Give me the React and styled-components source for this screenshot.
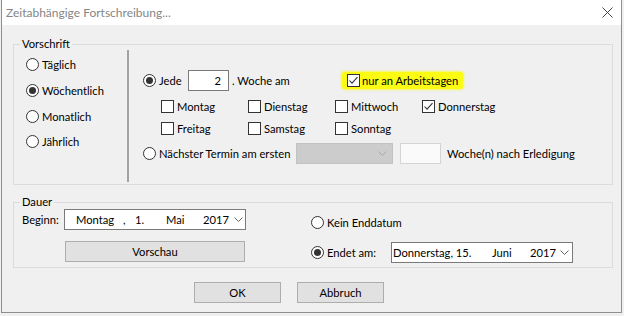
import React from 'react';
import styled, { createGlobalStyle } from 'styled-components';

const FONT = `"Lato", "Segoe UI", "Liberation Sans", sans-serif`;
const SIZE = '11.2px';

const Global = createGlobalStyle`
  html, body { margin: 0; padding: 0; background: #f0f0f0; }
  body { font-family: ${FONT}; font-size: ${SIZE}; color: #000; }
  * { box-sizing: border-box; }
  svg { flex: none; display: block; }
`;

const Window = styled.div`
  margin-left: 1px;
  width: 621px;
  height: 313px;
  border: 1px solid #8e8e8e;
  border-top: none;
  background: #f0f0f0;
  display: flex;
  flex-direction: column;
`;

const TitleBar = styled.div`
  height: 25px;
  flex: none;
  background: #fff;
  display: flex;
  align-items: center;
  justify-content: space-between;
  padding: 0 8px 0 4px;
`;

const Title = styled.span`
  color: #858585;
  font-size: 12px;
`;

const Body = styled.div`
  padding: 13px 8px 0 11px;
  display: flex;
  flex-direction: column;
`;

const GroupBox = styled.fieldset`
  margin: ${p => p.$top || 0}px 0 0 0;
  padding: 0;
  border: 1px solid #dcdcdc;
  min-width: 0;
`;

const Legend = styled.legend`
  padding: 0 2px;
  margin-left: 6px;
  line-height: 12px;
  font-size: ${SIZE};
`;

const RuleInner = styled.div`
  display: flex;
  height: 134px;
`;

const FreqColumn = styled.div`
  width: 113px;
  padding: 2px 0 0 12px;
  display: flex;
  flex-direction: column;
`;

const FreqRow = styled.div`
  height: 25.67px;
  display: flex;
  align-items: center;
`;

const Separator = styled.div`
  width: 2px;
  height: 132px;
  background: #a3a3a3;
`;

const DetailColumn = styled.div`
  flex: 1;
  padding: 19px 0 0 14px;
  display: flex;
  flex-direction: column;
`;

const Row = styled.div`
  display: flex;
  align-items: center;
  height: ${p => p.$h || 21}px;
  margin-top: ${p => p.$mt || 0}px;
`;

const Choice = styled.label`
  display: flex;
  align-items: center;
  gap: 3px;
  width: ${p => (p.$w ? `${p.$w}px` : 'auto')};
  flex: none;
  white-space: nowrap;
`;

const NumberBox = styled.div`
  width: 41px;
  height: 21px;
  background: #fff;
  border: 1px solid #7a7a7a;
  display: flex;
  align-items: center;
  justify-content: flex-end;
  padding-right: 7px;
  flex: none;
`;

const InlineText = styled.span`
  margin-left: ${p => p.$ml || 0}px;
  width: ${p => (p.$w ? `${p.$w}px` : 'auto')};
  white-space: nowrap;
  flex: none;
`;

const Highlight = styled.label`
  display: flex;
  align-items: center;
  gap: 2px;
  height: 17px;
  width: 121px;
  padding-left: 5px;
  background: #fbfb14;
  border-radius: 3px;
  box-shadow: 0 0 2px 1px rgba(250, 250, 30, 0.7);
  white-space: nowrap;
  flex: none;
`;

const DayGrid = styled.div`
  margin: 4px 0 0 18px;
  display: grid;
  grid-template-columns: repeat(4, 87px);
  grid-auto-rows: 22px;
  align-items: center;
`;

const DisabledCombo = styled.div`
  width: 97px;
  height: 21px;
  background: #cccccc;
  border: 1px solid #c2c2c2;
  display: flex;
  align-items: center;
  justify-content: flex-end;
  padding-right: 5px;
  flex: none;
`;

const DisabledEdit = styled.div`
  margin-left: 7px;
  width: 41px;
  height: 21px;
  background: #fafafa;
  border: 1px solid #d4d4d4;
  flex: none;
`;

const DurationInner = styled.div`
  display: flex;
  height: 59px;
`;

const StartColumn = styled.div`
  width: 283px;
  padding: 1px 0 0 8px;
  display: flex;
  flex-direction: column;
`;

const EndColumn = styled.div`
  flex: 1;
  padding: 4px 0 0 14px;
  display: flex;
  flex-direction: column;
`;

const FieldLabel = styled.span`
  width: 42px;
  flex: none;
`;

const DatePicker = styled.div`
  width: 182px;
  height: 21px;
  background: #fff;
  border: 1px solid #7a7a7a;
  display: flex;
  align-items: center;
  padding-left: ${p => p.$pl}px;
  flex: none;
`;

const Segment = styled.span`
  width: ${p => p.$w}px;
  flex: none;
  white-space: nowrap;
`;

const Button = styled.button`
  width: ${p => p.$w || 87}px;
  height: 21px;
  margin-left: ${p => p.$ml || 0}px;
  margin-top: ${p => p.$mt || 0}px;
  background: #e1e1e1;
  border: 1px solid #adadad;
  font-family: ${FONT};
  font-size: ${SIZE};
  color: #000;
  padding: 0;
  flex: none;
`;

const ButtonRow = styled.div`
  display: flex;
  gap: 16px;
  margin-top: 14px;
  padding-left: 181px;
`;

const Radio = ({ checked }) => (
  <svg width="13" height="13" viewBox="0 0 13 13">
    <circle cx="6.5" cy="6.5" r="6" fill="#fff" stroke="#333" strokeWidth="1" />
    {checked && <circle cx="6.5" cy="6.5" r="3.5" fill="#333" />}
  </svg>
);

const Check = ({ checked }) => (
  <svg width="13" height="13" viewBox="0 0 13 13">
    <rect x="0.5" y="0.5" width="12" height="12" fill="#fff" stroke="#333" strokeWidth="1" />
    {checked && (
      <polyline points="2.5,6.5 5,9.2 10.5,3.2" fill="none" stroke="#333" strokeWidth="1.1" />
    )}
  </svg>
);

const Chevron = ({ color = '#666' }) => (
  <svg width="9" height="5" viewBox="0 0 9 5">
    <polyline points="0.5,0.5 4.5,4.5 8.5,0.5" fill="none" stroke={color} strokeWidth="1" />
  </svg>
);

const CloseIcon = () => (
  <svg width="11" height="11" viewBox="0 0 11 11">
    <line x1="0.5" y1="0.5" x2="10.5" y2="10.5" stroke="#444" strokeWidth="1" />
    <line x1="10.5" y1="0.5" x2="0.5" y2="10.5" stroke="#444" strokeWidth="1" />
  </svg>
);

const frequencies = [
  { label: 'Täglich', checked: false },
  { label: 'Wöchentlich', checked: true },
  { label: 'Monatlich', checked: false },
  { label: 'Jährlich', checked: false },
];

const days = [
  { label: 'Montag', checked: false },
  { label: 'Dienstag', checked: false },
  { label: 'Mittwoch', checked: false },
  { label: 'Donnerstag', checked: true },
  { label: 'Freitag', checked: false },
  { label: 'Samstag', checked: false },
  { label: 'Sonntag', checked: false },
];

export default function App() {
  return (
    <>
      <Global />
      <Window>
        <TitleBar>
          <Title>Zeitabhängige Fortschreibung...</Title>
          <CloseIcon />
        </TitleBar>
        <Body>
          <GroupBox>
            <Legend>Vorschrift</Legend>
            <RuleInner>
              <FreqColumn>
                {frequencies.map(f => (
                  <FreqRow key={f.label}>
                    <Choice>
                      <Radio checked={f.checked} />
                      {f.label}
                    </Choice>
                  </FreqRow>
                ))}
              </FreqColumn>
              <Separator />
              <DetailColumn>
                <Row $h={22}>
                  <Choice $w={45}>
                    <Radio checked />
                    Jede
                  </Choice>
                  <NumberBox>2</NumberBox>
                  <InlineText $ml={3} $w={110}>. Woche am</InlineText>
                  <Highlight>
                    <Check checked />
                    nur an Arbeitstagen
                  </Highlight>
                </Row>
                <DayGrid>
                  {days.map(d => (
                    <Choice key={d.label}>
                      <Check checked={d.checked} />
                      {d.label}
                    </Choice>
                  ))}
                </DayGrid>
                <Row $mt={4}>
                  <Choice $w={153}>
                    <Radio />
                    Nächster Termin am ersten
                  </Choice>
                  <DisabledCombo>
                    <Chevron color="#a9a9a9" />
                  </DisabledCombo>
                  <DisabledEdit />
                  <InlineText $ml={6}>Woche(n) nach Erledigung</InlineText>
                </Row>
              </DetailColumn>
            </RuleInner>
          </GroupBox>

          <GroupBox $top={11}>
            <Legend>Dauer</Legend>
            <DurationInner>
              <StartColumn>
                <Row>
                  <FieldLabel>Beginn:</FieldLabel>
                  <DatePicker $pl={11}>
                    <Segment $w={47}>Montag</Segment>
                    <Segment $w={12}>,</Segment>
                    <Segment $w={31}>1.</Segment>
                    <Segment $w={37}>Mai</Segment>
                    <Segment $w={31}>2017</Segment>
                    <Chevron />
                  </DatePicker>
                </Row>
                <Button $w={180} $ml={43} $mt={11}>Vorschau</Button>
              </StartColumn>
              <EndColumn>
                <Row $h={20}>
                  <Choice>
                    <Radio />
                    Kein Enddatum
                  </Choice>
                </Row>
                <Row $mt={9.5}>
                  <Choice $w={80}>
                    <Radio checked />
                    Endet am:
                  </Choice>
                  <DatePicker $pl={1}>
                    <Segment $w={99}>Donnerstag, 15.</Segment>
                    <Segment $w={38}>Juni</Segment>
                    <Segment $w={30}>2017</Segment>
                    <Chevron />
                  </DatePicker>
                </Row>
              </EndColumn>
            </DurationInner>
          </GroupBox>

          <ButtonRow>
            <Button>OK</Button>
            <Button>Abbruch</Button>
          </ButtonRow>
        </Body>
      </Window>
    </>
  );
}
